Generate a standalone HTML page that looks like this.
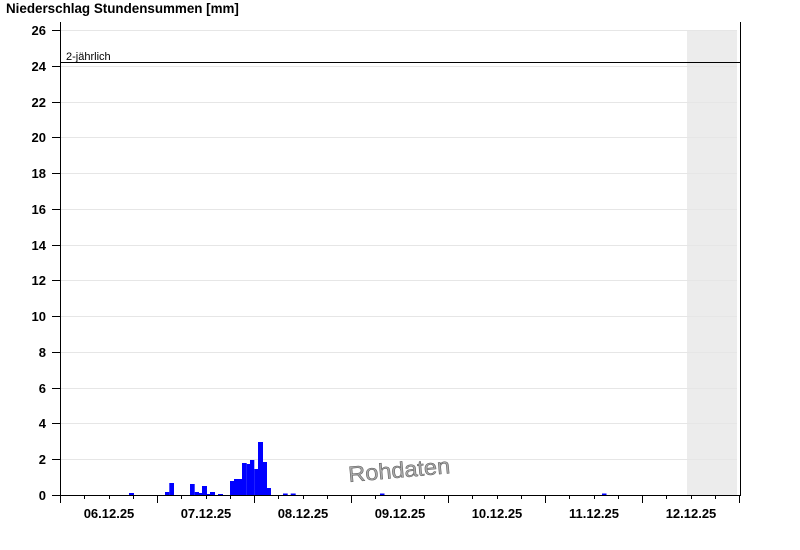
<!DOCTYPE html>
<html><head><meta charset="utf-8"><style>
html,body{margin:0;padding:0;background:#fff;width:800px;height:550px;overflow:hidden}
svg{display:block}
text{font-family:"Liberation Sans",Arial,sans-serif}
</style></head><body>
<svg width="800" height="550" viewBox="0 0 800 550" xmlns="http://www.w3.org/2000/svg">
<text x="6" y="13" font-size="13.4" font-weight="bold" fill="#000">Niederschlag Stundensummen [mm]</text>
<rect x="687" y="30" width="50" height="465" fill="#ececec"/>
<g stroke="#e6e6e6" stroke-width="1">
<line x1="61" x2="737" y1="30.5" y2="30.5"/>
<line x1="61" x2="737" y1="66.5" y2="66.5"/>
<line x1="61" x2="737" y1="102.5" y2="102.5"/>
<line x1="61" x2="737" y1="137.5" y2="137.5"/>
<line x1="61" x2="737" y1="173.5" y2="173.5"/>
<line x1="61" x2="737" y1="209.5" y2="209.5"/>
<line x1="61" x2="737" y1="245.5" y2="245.5"/>
<line x1="61" x2="737" y1="280.5" y2="280.5"/>
<line x1="61" x2="737" y1="316.5" y2="316.5"/>
<line x1="61" x2="737" y1="352.5" y2="352.5"/>
<line x1="61" x2="737" y1="388.5" y2="388.5"/>
<line x1="61" x2="737" y1="423.5" y2="423.5"/>
<line x1="61" x2="737" y1="459.5" y2="459.5"/>
</g>
<g fill="#0000ff">
<rect x="129" y="493" width="5" height="2"/>
<rect x="165" y="492" width="4.3" height="3"/>
<rect x="169.3" y="483" width="4.7" height="12"/>
<rect x="190" y="484" width="4.7" height="11"/>
<rect x="194.7" y="492" width="4.3" height="3"/>
<rect x="199" y="493" width="3" height="2"/>
<rect x="202" y="486" width="5" height="9"/>
<rect x="207" y="494" width="3" height="1"/>
<rect x="210" y="492" width="5" height="3"/>
<rect x="218" y="494" width="5" height="1"/>
<rect x="230" y="481" width="4" height="14"/>
<rect x="234" y="479" width="8" height="16"/>
<rect x="242" y="463" width="4.7" height="32"/>
<rect x="246.7" y="464" width="3.3" height="31"/>
<rect x="250" y="460" width="4.3" height="35"/>
<rect x="254.3" y="469" width="3.7" height="26"/>
<rect x="258" y="442" width="5" height="53"/>
<rect x="263" y="462" width="4" height="33"/>
<rect x="267" y="488" width="4" height="7"/>
<rect x="283" y="493.5" width="4.7" height="1.5"/>
<rect x="290.7" y="493.5" width="5" height="1.5"/>
<rect x="380" y="493.5" width="4.5" height="1.5"/>
<rect x="602" y="493.5" width="4.5" height="1.5"/>
</g>
<line x1="61" x2="740" y1="62.5" y2="62.5" stroke="#000" stroke-width="1"/>
<text x="66" y="60" font-size="11" fill="#000">2-jährlich</text>
<g stroke="#000" stroke-width="1">
<line x1="60.5" x2="60.5" y1="22" y2="495"/>
<line x1="740.5" x2="740.5" y1="22" y2="495"/>
<line x1="52" x2="741" y1="495.5" y2="495.5"/>
<line x1="52" x2="60" y1="30.5" y2="30.5"/>
<line x1="52" x2="60" y1="66.5" y2="66.5"/>
<line x1="52" x2="60" y1="102.5" y2="102.5"/>
<line x1="52" x2="60" y1="137.5" y2="137.5"/>
<line x1="52" x2="60" y1="173.5" y2="173.5"/>
<line x1="52" x2="60" y1="209.5" y2="209.5"/>
<line x1="52" x2="60" y1="245.5" y2="245.5"/>
<line x1="52" x2="60" y1="280.5" y2="280.5"/>
<line x1="52" x2="60" y1="316.5" y2="316.5"/>
<line x1="52" x2="60" y1="352.5" y2="352.5"/>
<line x1="52" x2="60" y1="388.5" y2="388.5"/>
<line x1="52" x2="60" y1="423.5" y2="423.5"/>
<line x1="52" x2="60" y1="459.5" y2="459.5"/>
</g>
<g stroke="#000" stroke-width="1">
<line x1="60.5" x2="60.5" y1="495" y2="503"/>
<line x1="84.5" x2="84.5" y1="495" y2="499"/>
<line x1="109.5" x2="109.5" y1="495" y2="499"/>
<line x1="133.5" x2="133.5" y1="495" y2="499"/>
<line x1="157.5" x2="157.5" y1="495" y2="503"/>
<line x1="181.5" x2="181.5" y1="495" y2="499"/>
<line x1="206.5" x2="206.5" y1="495" y2="499"/>
<line x1="230.5" x2="230.5" y1="495" y2="499"/>
<line x1="254.5" x2="254.5" y1="495" y2="503"/>
<line x1="278.5" x2="278.5" y1="495" y2="499"/>
<line x1="303.5" x2="303.5" y1="495" y2="499"/>
<line x1="327.5" x2="327.5" y1="495" y2="499"/>
<line x1="351.5" x2="351.5" y1="495" y2="503"/>
<line x1="375.5" x2="375.5" y1="495" y2="499"/>
<line x1="400.5" x2="400.5" y1="495" y2="499"/>
<line x1="424.5" x2="424.5" y1="495" y2="499"/>
<line x1="448.5" x2="448.5" y1="495" y2="503"/>
<line x1="472.5" x2="472.5" y1="495" y2="499"/>
<line x1="497.5" x2="497.5" y1="495" y2="499"/>
<line x1="521.5" x2="521.5" y1="495" y2="499"/>
<line x1="545.5" x2="545.5" y1="495" y2="503"/>
<line x1="569.5" x2="569.5" y1="495" y2="499"/>
<line x1="594.5" x2="594.5" y1="495" y2="499"/>
<line x1="618.5" x2="618.5" y1="495" y2="499"/>
<line x1="642.5" x2="642.5" y1="495" y2="503"/>
<line x1="666.5" x2="666.5" y1="495" y2="499"/>
<line x1="691.5" x2="691.5" y1="495" y2="499"/>
<line x1="715.5" x2="715.5" y1="495" y2="499"/>
<line x1="739.5" x2="739.5" y1="495" y2="503"/>
</g>
<g font-size="13" font-weight="bold" fill="#000" text-anchor="end">
<text x="46" y="35">26</text>
<text x="46" y="71">24</text>
<text x="46" y="107">22</text>
<text x="46" y="142">20</text>
<text x="46" y="178">18</text>
<text x="46" y="214">16</text>
<text x="46" y="250">14</text>
<text x="46" y="285">12</text>
<text x="46" y="321">10</text>
<text x="46" y="357">8</text>
<text x="46" y="393">6</text>
<text x="46" y="428">4</text>
<text x="46" y="464">2</text>
<text x="46" y="500">0</text>
</g>
<g font-size="13" font-weight="bold" fill="#000" text-anchor="middle">
<text x="109" y="518">06.12.25</text>
<text x="206" y="518">07.12.25</text>
<text x="303" y="518">08.12.25</text>
<text x="400" y="518">09.12.25</text>
<text x="497" y="518">10.12.25</text>
<text x="594" y="518">11.12.25</text>
<text x="691" y="518">12.12.25</text>
</g>
<text x="349" y="482" font-size="22" fill="#aaa" stroke="#555" stroke-width="0.5" transform="rotate(-5 349 482)" textLength="102" lengthAdjust="spacingAndGlyphs">Rohdaten</text>
</svg>
</body></html>
